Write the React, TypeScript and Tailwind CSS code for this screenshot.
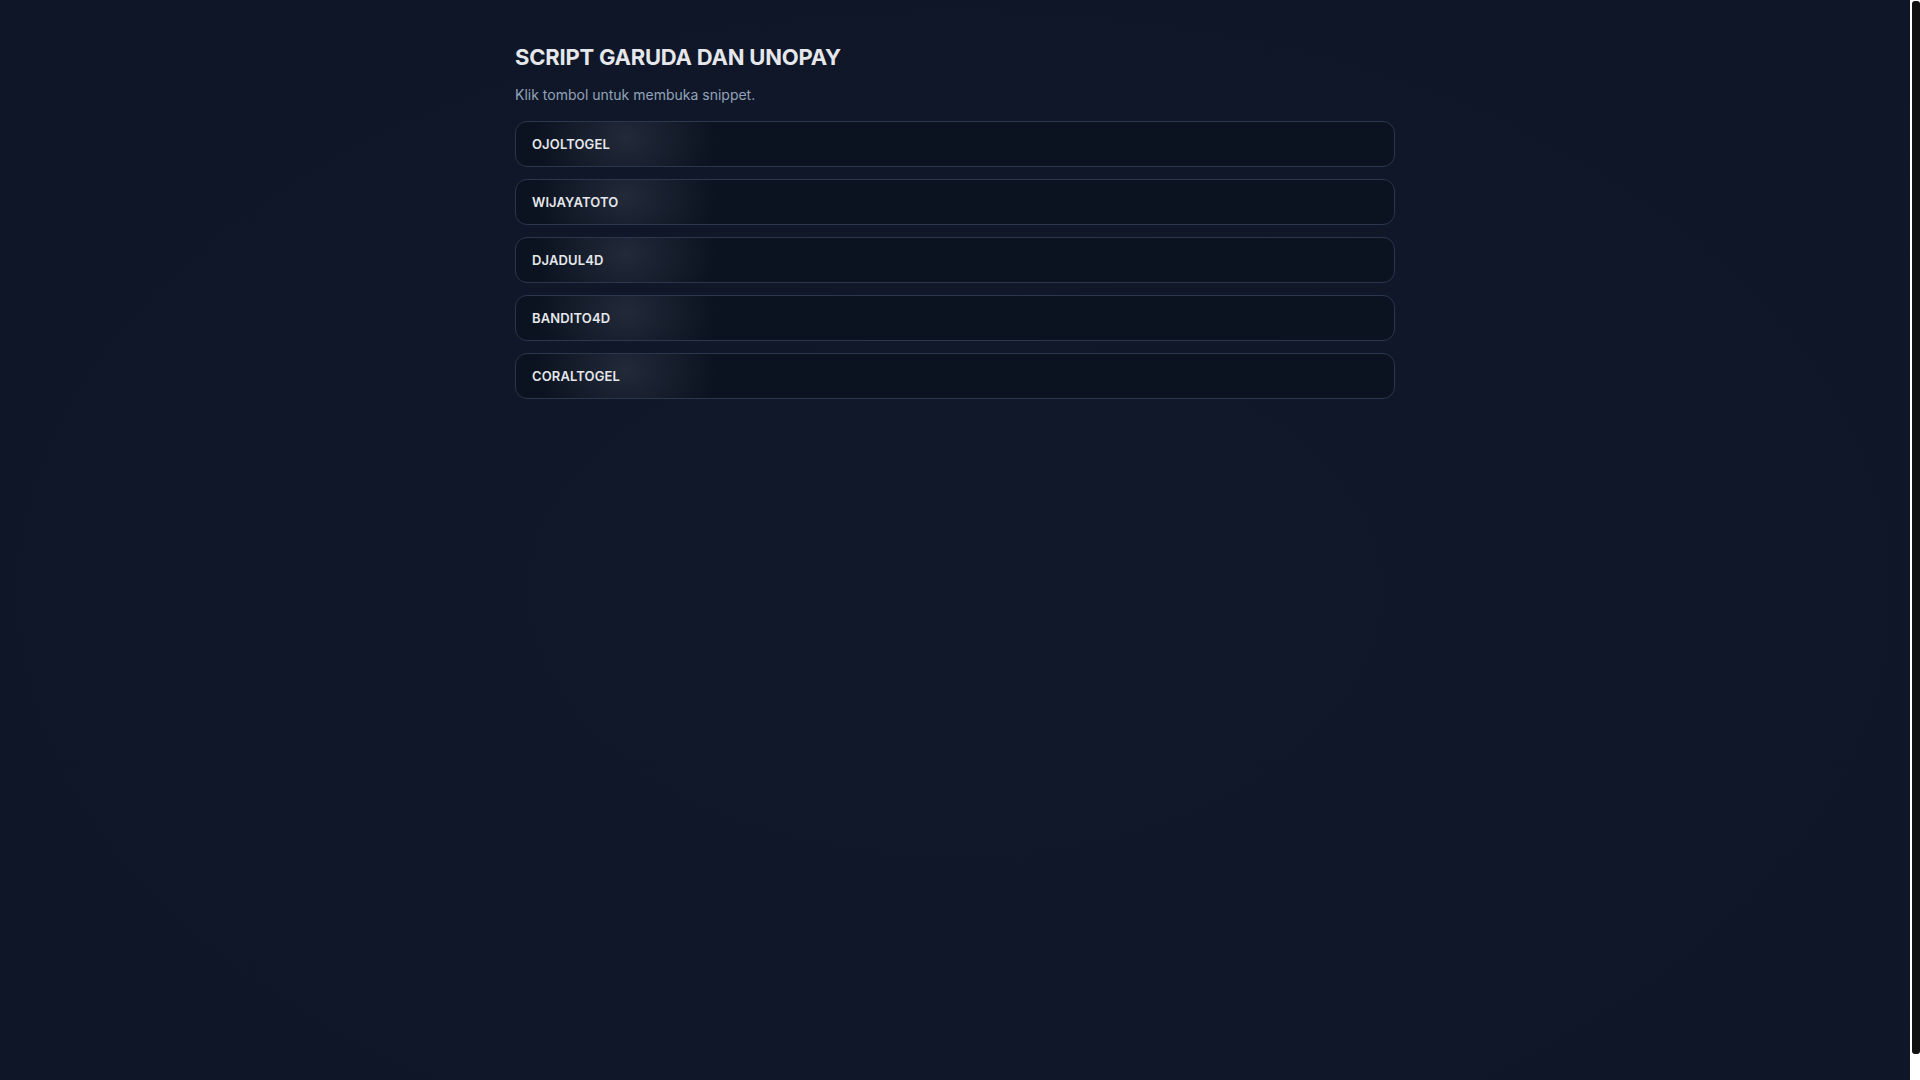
const sites = ["OJOLTOGEL", "WIJAYATOTO", "DJADUL4D", "BANDITO4D", "CORALTOGEL"];

export default function App() {
  return (
    <div
      className="flex h-screen w-full overflow-hidden text-gray-200"
      style={{ fontFamily: "Inter, 'Noto Sans', sans-serif" }}
    >
      <main className="h-full flex-1 bg-[#0f172a] bg-[radial-gradient(ellipse_at_50%_55%,#111829_0%,#0f1729_55%,#0e1627_100%)]">
        <div className="mx-auto max-w-[880px] pt-[43px]">
          {/* Header */}
          <h1 className="text-[22px] leading-[28px] font-bold tracking-[-0.01em] text-[#e5e7eb]">
            SCRIPT GARUDA DAN UNOPAY
          </h1>
          <p className="mt-[14px] text-sm text-[#94a3b8]">Klik tombol untuk membuka snippet.</p>

          {/* Buttons */}
          <div className="mt-4 flex flex-col gap-3">
            {sites.map((name) => (
              <button
                key={name}
                className="w-full rounded-xl border border-[#2a374d] bg-[#0b1220] bg-[radial-gradient(ellipse_90px_70px_at_110px_16px,rgba(148,163,184,0.17),transparent_100%)] px-4 py-3 text-left text-[13px] leading-5 font-semibold tracking-[0.01em] text-[#e5e7eb]"
              >
                {name}
              </button>
            ))}
          </div>
        </div>
      </main>

      {/* scrollbar strip */}
      <div className="h-full w-[10px] shrink-0 bg-white pt-[1px]">
        <div className="ml-[2px] h-[1053px] w-[8px] rounded-[3px] bg-[#111111]" />
      </div>
    </div>
  );
}
